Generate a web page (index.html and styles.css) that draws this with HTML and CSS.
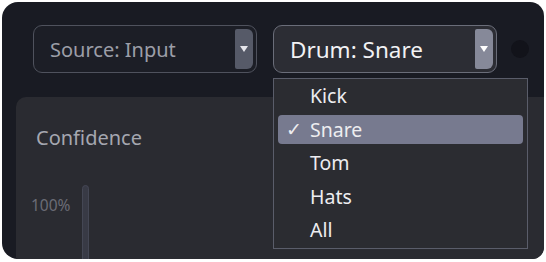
FILE: index.html
```html
<!DOCTYPE html>
<html lang="en">
<head>
    <meta charset="UTF-8">
    <title>Drum Detector</title>
    <link rel="stylesheet" href="styles.css">
</head>
<body>
    <div class="window">
        <div class="toolbar">
            <div class="select">
                <span class="select-label">Source: Input</span>
                <span class="select-btn"><span class="caret"></span></span>
            </div>
            <div class="select open">
                <span class="select-label">Drum: Snare</span>
                <span class="select-btn"><span class="caret"></span></span>
            </div>
            <div class="dot"></div>
        </div>

        <div class="panel">
            <h2 class="panel-title">Confidence</h2>
            <div class="meter">
                <span class="meter-label">100%</span>
                <div class="meter-track"></div>
            </div>
        </div>

        <ul class="menu">
            <li class="menu-item">Kick</li>
            <li class="menu-item selected"><span class="check">&#10003;</span>Snare</li>
            <li class="menu-item">Tom</li>
            <li class="menu-item">Hats</li>
            <li class="menu-item">All</li>
        </ul>
    </div>
</body>
</html>
```

FILE: styles.css
```css
body {
    margin: 0;
    background-color: #ffffff;
    font-family: 'Noto Sans', 'Open Sans', sans-serif;
}

.window {
    position: relative;
    margin: 2px 0 0 2px;
    width: 542px;
    height: 257px;
    background-color: #191b23;
    border-radius: 16px 14px 12px 16px;
    overflow: hidden;
    display: flex;
    flex-direction: column;
}

.toolbar {
    display: flex;
    align-items: center;
    gap: 16px;
    padding: 23px 0 0 31px;
}

.select {
    box-sizing: border-box;
    width: 224px;
    height: 48px;
    border: 1.5px solid #4f525d;
    border-radius: 9px;
    display: flex;
    align-items: center;
    justify-content: space-between;
    padding: 3px 3px 3px 16px;
    background-color: #1c1e26;
}

.select-label {
    font-size: 20px;
    color: #9c9ea8;
}

.select-btn {
    align-self: stretch;
    width: 18px;
    background-color: #565a68;
    border-radius: 2px 6px 6px 2px;
    display: flex;
    align-items: center;
    justify-content: center;
}

.caret {
    width: 0;
    height: 0;
    border-left: 4px solid transparent;
    border-right: 4px solid transparent;
    border-top: 6px solid #e6e6ec;
}

.select.open {
    background-color: #2c2d34;
    border-color: #6a6d79;
}

.select.open .select-label {
    font-size: 22.5px;
    color: #f2f2f4;
}

.select.open .select-btn {
    background-color: #868999;
}

.select.open .caret {
    border-top-color: #ffffff;
}

.dot {
    width: 18px;
    height: 18px;
    border-radius: 50%;
    background-color: #12131a;
    margin-left: -2px;
}

.panel {
    flex: 1;
    margin: 24px 0 0 14px;
    background-color: #2a2b31;
    border-radius: 10px 0 0 0;
    padding: 27px 0 0 20px;
}

.panel-title {
    margin: 0;
    font-size: 20px;
    font-weight: 400;
    color: #a5a7b0;
}

.meter {
    display: flex;
    align-items: flex-start;
    gap: 12px;
    margin: 34px 0 0 -5px;
}

.meter-label {
    font-size: 15.5px;
    color: #6a6c76;
    margin-top: 9px;
}

.meter-track {
    box-sizing: border-box;
    width: 7px;
    height: 90px;
    background-color: #383a45;
    border: 1px solid #444754;
    border-radius: 4px;
}

.menu {
    position: absolute;
    left: 271px;
    top: 76px;
    box-sizing: border-box;
    width: 255px;
    height: 171px;
    margin: 0;
    padding: 0 4px;
    list-style: none;
    background-color: #2b2c31;
    border: 1.5px solid #5a5d6a;
}

.menu-item {
    position: relative;
    height: 33.5px;
    line-height: 33px;
    padding-left: 32px;
    font-size: 19.5px;
    color: #ededf0;
    border-radius: 4px;
}

.menu-item.selected {
    background-color: #777a8f;
    height: 29px;
    line-height: 29px;
    margin: 2px 0 2.5px;
}

.check {
    position: absolute;
    left: 8px;
    font-size: 19px;
}
```
